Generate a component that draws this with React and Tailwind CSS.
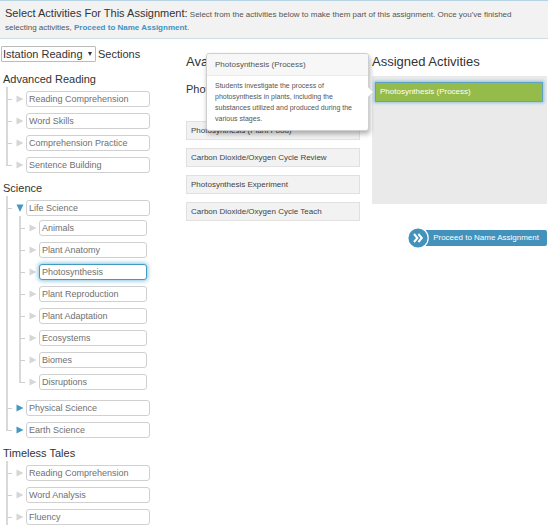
import React, { useState } from 'react'
import clsx from 'clsx'

const sections = [
  {
    title: 'Advanced Reading',
    items: [
      { name: 'Reading Comprehension' },
      { name: 'Word Skills' },
      { name: 'Comprehension Practice' },
      { name: 'Sentence Building' },
    ],
  },
  {
    title: 'Science',
    items: [
      {
        name: 'Life Science',
        open: true,
        children: [
          { name: 'Animals' },
          { name: 'Plant Anatomy' },
          { name: 'Photosynthesis' },
          { name: 'Plant Reproduction' },
          { name: 'Plant Adaptation' },
          { name: 'Ecosystems' },
          { name: 'Biomes' },
          { name: 'Disruptions' },
        ],
      },
      { name: 'Physical Science', expandable: true },
      { name: 'Earth Science', expandable: true },
    ],
  },
  {
    title: 'Timeless Tales',
    more: true,
    items: [{ name: 'Reading Comprehension' }, { name: 'Word Analysis' }, { name: 'Fluency' }],
  },
]

const available = [
  'Photosynthesis (Plant Food)',
  'Carbon Dioxide/Oxygen Cycle Review',
  'Photosynthesis Experiment',
  'Carbon Dioxide/Oxygen Cycle Teach',
]

function Arrow({ open, active }) {
  return (
    <svg viewBox="0 0 8 8" className={clsx('w-2 h-2 shrink-0', active ? 'fill-[#4499c3]' : 'fill-[#d6d6d6]')} aria-hidden="true">
      <path d={open ? 'M0.5 0.5H7.5L4 8Z' : 'M0.5 0.5V7.5L7.5 4Z'} />
    </svg>
  )
}

function TreeItem({ item, first, last, nested, selected, onSelect }) {
  return (
    <li className="flex">
      <div className="w-[6px] shrink-0 flex flex-col">
        <div className={clsx('border-l-2 border-b border-b-[#cfcfcf] border-l-[#d9d9d9]', first ? 'h-[13px]' : 'h-[15px]')} />
        {!last && <div className="flex-1 border-l-2 border-[#d9d9d9]" />}
      </div>
      <div className={clsx('flex-1 min-w-0', first ? 'pt-1' : 'pt-1.5')}>
        <div className={clsx('flex items-center gap-0.5 pl-1', nested && 'pr-[3px]')}>
          <Arrow open={item.open} active={item.children || item.expandable} />
          <button
            type="button"
            aria-expanded={item.children ? true : undefined}
            onClick={() => onSelect(item.name)}
            className={clsx(
              'flex-1 h-4 rounded-[3px] border bg-white px-[2px] text-left text-[9px] leading-[14px] text-[#707070]',
              selected === item.name
                ? 'border-[#4499c3] shadow-[0_0_4px_1px_#8cc4e2]'
                : 'border-[#d0d0d0]'
            )}
          >
            {item.name}
          </button>
        </div>
        {item.children && (
          <ul className="pl-[7px] pb-1">
            {item.children.map((child, i) => (
              <TreeItem
                key={child.name}
                item={child}
                first={i === 0}
                last={i === item.children.length - 1}
                nested
                selected={selected}
                onSelect={onSelect}
              />
            ))}
          </ul>
        )}
      </div>
    </li>
  )
}

function Popover() {
  return (
    <div
      role="tooltip"
      className="absolute z-10 left-[20px] -top-px w-[163px] rounded-[3px] border border-[#cfcfcf] bg-white shadow-[1px_3px_5px_rgba(0,0,0,0.3)]"
    >
      <h4 className="rounded-t-[3px] border-b border-[#ebebeb] bg-[#f7f7f7] px-2 text-[8px] leading-[21px] text-[#555]">
        Photosynthesis (Process)
      </h4>
      <p className="px-2 pt-1 pb-[6px] text-[7px] leading-[11px] text-[#555]">
        Students investigate the process of photosynthesis in plants, including the substances utilized and produced
        during the various stages.
      </p>
      <svg viewBox="0 0 6 12" className="absolute left-full top-[32px] w-[6px] h-3" aria-hidden="true">
        <path d="M-1 0L5.5 6L-1 12Z" fill="#fff" stroke="#cfcfcf" strokeWidth="0.6" />
      </svg>
    </div>
  )
}

export default function App() {
  const [selected, setSelected] = useState('Photosynthesis')

  return (
    <div className="bg-white font-['Liberation_Sans',Arial,sans-serif] text-[#333]">
      <header className="border-t border-b border-t-[#b5d3e3] border-b-[#cfdde7] bg-[#f2f2f2] px-[5px] pt-[6px] pb-1 text-[8px] leading-[13px] text-[#555]">
        <h1 className="inline text-[11px] text-[#333]">Select Activities For This Assignment:</h1> Select from the
        activities below to make them part of this assignment. Once you've finished selecting activities,{' '}
        <a href="#name" className="font-bold text-[#3f92bf]">Proceed to Name Assignment</a>.
      </header>

      <main className="flex pt-[7px]">
        <nav className="w-[150px] shrink-0">
          <div className="flex items-center gap-[2px] pl-px text-[11px] leading-[14px]">
            <div className="relative">
              <select id="area" className="appearance-none h-4 w-[95px] rounded-[1px] border border-[#bbb] bg-white pl-px leading-[14px]">
                <option>Istation Reading</option>
              </select>
              <svg viewBox="0 0 4 4" className="pointer-events-none absolute right-1 top-[6px] w-1 h-1 fill-[#333]" aria-hidden="true">
                <path d="M0 0H4L2 4Z" />
              </svg>
            </div>
            <label htmlFor="area">Sections</label>
          </div>

          <div className="flex flex-col gap-[7px] pt-[9px]">
            {sections.map((section) => (
              <section key={section.title}>
                <h2 className="pl-[3px] text-[11px] leading-4">{section.title}</h2>
                <ul className="pl-[6px]">
                  {section.items.map((item, i) => (
                    <TreeItem
                      key={item.name}
                      item={item}
                      first={i === 0}
                      last={!section.more && i === section.items.length - 1}
                      selected={selected}
                      onSelect={setSelected}
                    />
                  ))}
                </ul>
              </section>
            ))}
          </div>
        </nav>

        <div className="flex-1 grid grid-cols-[174fr_175fr] gap-3 items-start pl-9 pr-px pt-2">
          <section className="relative">
            <h2 className="text-[13px] leading-4">Available Activities</h2>
            <h3 className="pt-[11px] text-[11px] leading-4">Photosynthesis</h3>
            <ul className="flex flex-col gap-2 pt-6">
              {available.map((name) => (
                <li key={name}>
                  <button
                    type="button"
                    className="block w-full h-[19px] border border-[#e0e0e0] bg-[#f2f2f2] px-1 text-left text-[8px] leading-[17px] text-[#444]"
                  >
                    {name}
                  </button>
                </li>
              ))}
            </ul>
            <Popover />
          </section>

          <section>
            <h2 className="text-[13px] leading-4">Assigned Activities</h2>
            <ul className="mt-[6px] min-h-32 bg-[#eaeaea] pt-[6px] pl-[3px] pr-1">
              <li>
                <button
                  type="button"
                  className="block w-full h-5 border border-[#5fa3c0] bg-[#95bb4a] px-1 text-left text-[8px] leading-[18px] text-white shadow-[0_0_3px_1px_#8cc0dc]"
                >
                  Photosynthesis (Process)
                </button>
              </li>
            </ul>
            <div className="flex justify-end pt-[23px]">
              <button type="button" className="flex items-center text-[8px] leading-4 text-white">
                <svg viewBox="0 0 22 22" className="relative z-10 -mr-2 w-[22px] h-[22px]" aria-hidden="true">
                  <circle cx="11" cy="11" r="10.2" fill="#4292bb" stroke="#fff" strokeWidth="1.2" />
                  <path d="M7 7L10.4 11L7 15M11.4 7L14.8 11L11.4 15" fill="none" stroke="#fff" strokeWidth="2" />
                </svg>
                <span className="rounded-r-[2px] bg-[#4292bb] pl-3 pr-2">Proceed to Name Assignment</span>
              </button>
            </div>
          </section>
        </div>
      </main>
    </div>
  )
}
